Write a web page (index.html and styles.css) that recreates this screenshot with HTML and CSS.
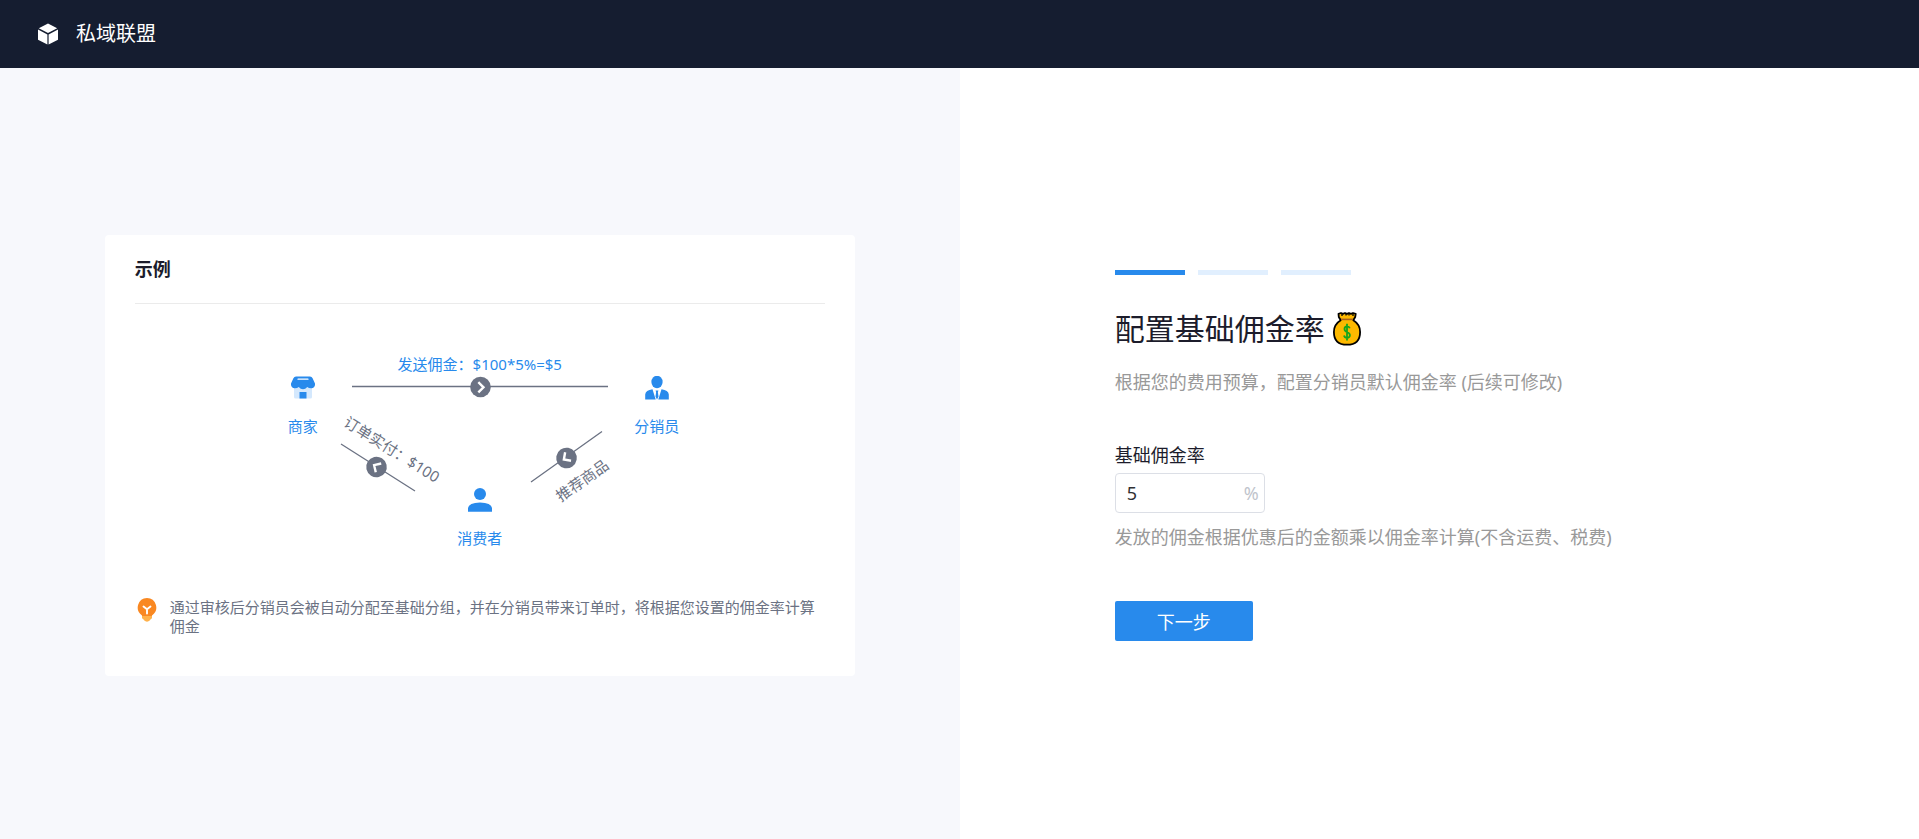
FILE: index.html
```html
<!DOCTYPE html>
<html lang="zh-CN">
<head>
<meta charset="utf-8">
<title>私域联盟</title>
<link rel="stylesheet" href="styles.css">
</head>
<body>
<header class="topbar">
  <svg class="topbar-logo" viewBox="0 0 20 22" aria-hidden="true">
    <path fill="#fff" d="M10 0.4 19.2 5.2 10 10 0.8 5.2ZM0 6.5 9.4 11.4V21.6L0 16.8ZM20 6.5 10.6 11.4V21.6L20 16.8Z"/>
  </svg>
  <span class="topbar-name">私域联盟</span>
</header>
<main class="split">
  <section class="pane pane-example">
    <article class="card">
      <h2 class="card-title">示例</h2>
      <div class="flow">
        <svg class="flow-lines" viewBox="0 0 400 206" aria-hidden="true">
          <defs>
            <g id="arrow">
              <circle r="10.3" fill="#6b7283"/>
              <path d="M-1.3-4 3 0.3-1.3 4.6" fill="none" stroke="#fff" stroke-width="2.4" stroke-linecap="square"/>
            </g>
          </defs>
          <g stroke="#6b7283" stroke-width="1.3">
            <path d="M72 36.5H328M61 94 135 141M251 132 322 81.5"/>
          </g>
          <use href="#arrow" transform="translate(200.5 37)"/>
          <use href="#arrow" transform="translate(96.5 117) rotate(212)"/>
          <use href="#arrow" transform="translate(286.5 108) rotate(145)"/>
        </svg>
        <div class="node node-merchant">
          <svg class="node-icon" viewBox="0 0 24 24" aria-hidden="true">
            <path fill="#d4e8fd" d="M3 11H21V21Q21 22.5 19.5 22.5H4.500Q3 22.500 3 21Z"/>
            <path fill="#288aec" d="M5 0.500H19Q20.800 0.500 21.600 2.200L24 7.500V9Q23.500 12 20.500 12.300Q18 12.500 16.300 11Q14.300 13.200 12 13.200Q9.700 13.200 7.700 11Q6 12.500 3.500 12.300Q0.500 12 0 9V7.500L2.400 2.200Q3.200 0.500 5 0.500Z"/>
            <path stroke="#fff" stroke-width="1.200" stroke-linecap="round" d="M7 3.200H17"/>
            <path fill="#288aec" d="M8.500 16H15.500V22.500H8.500Z"/>
          </svg>
          <span>商家</span>
        </div>
        <div class="node node-agent">
          <svg class="node-icon" viewBox="0 0 24 24" aria-hidden="true">
            <g fill="#288aec">
              <ellipse cx="12" cy="6" rx="5.600" ry="6.200"/>
              <path d="M7.500 13.300 10.700 23.500H0.200V18.500Q0.600 14.200 7.500 13.300ZM16.500 13.300 13.300 23.500H23.800V18.500Q23.400 14.200 16.500 13.300ZM10.600 14.500H13.400L12.900 16.300 13.500 20.500 12 23.500 10.500 20.500 11.100 16.300Z"/>
            </g>
          </svg>
          <span>分销员</span>
        </div>
        <div class="node node-customer">
          <svg class="node-icon" viewBox="0 0 24 24" aria-hidden="true">
            <g fill="#288aec">
              <circle cx="12" cy="6" r="6"/>
              <path d="M0 23.800V20Q0.800 14.800 12 14.500Q23.200 14.800 24 20V23.800Z"/>
            </g>
          </svg>
          <span>消费者</span>
        </div>
        <span class="edge edge-commission">发送佣金：$100*5%=$5</span>
        <span class="edge edge-order">订单实付：$100</span>
        <span class="edge edge-recommend">推荐商品</span>
      </div>
      <div class="tip">
        <svg class="tip-icon" viewBox="0 0 20 24" aria-hidden="true">
          <path fill="#ffb14a" d="M5 16H15V20.500H14.500Q13.500 21 13 22.300Q10 25 7 22.300Q6.500 21 5.500 20.500H5Z"/>
          <path fill="#f98822" d="M10 0A9.500 9.500 0 0 1 15 17.400V18H5V17.400A9.500 9.500 0 0 1 10 0Z"/>
          <path fill="none" stroke="#fff" stroke-width="1.900" stroke-linecap="round" stroke-linejoin="round" d="M6.500 8.500 10 11.300 13.500 8.500M10 11.300V15.500"/>
        </svg>
        <p class="tip-text">通过审核后分销员会被自动分配至基础分组，并在分销员带来订单时，将根据您设置的佣金率计算佣金</p>
      </div>
    </article>
  </section>
  <section class="pane pane-setup">
    <form class="setup">
      <div class="steps">
        <span class="step step-active"></span>
        <span class="step"></span>
        <span class="step"></span>
      </div>
      <h1 class="setup-title">
        配置基础佣金率
        <svg class="setup-emoji" viewBox="0 0 28 34" role="img" aria-label="钱袋">
          <path fill="#fdb900" stroke="#000" stroke-width="1.800" stroke-linejoin="round" d="M5.500 1.800 8 1 10 1.800 12 1 14 1.800 16 1 18 1.800 20 1 22.700 1.800 22.200 5 20.300 8.300Q27.100 12.500 27.100 20Q27.100 32.700 14 32.700Q0.900 32.700 0.900 20Q0.900 12.500 7.700 8.300L5.800 5Z"/>
          <path fill="none" stroke="#000" stroke-width="1.300" d="M9 2V4M13 2V3.500M16 2V3.500M20 2V4"/>
          <path stroke="#a8611b" stroke-width="1.600" d="M8 7.400H20"/>
          <path fill="none" stroke="#16a51c" stroke-width="1.800" d="M16.800 16.300Q16.200 14.300 14 14.300Q11.500 14.400 11.500 17Q11.500 19 14 20Q16.900 21 16.900 23.300Q16.800 25.800 14 25.900Q11.600 25.800 11 23.500M14 11.800V28.500"/>
        </svg>
      </h1>
      <p class="setup-desc">根据您的费用预算，配置分销员默认佣金率 (后续可修改)</p>
      <label class="field-label" for="rate">基础佣金率</label>
      <div class="field-box">
        <input class="field-input" id="rate" type="text" value="5">
        <span class="field-unit">%</span>
      </div>
      <p class="field-hint">发放的佣金根据优惠后的金额乘以佣金率计算(不含运费、税费)</p>
      <button class="next" type="button">下一步</button>
    </form>
  </section>
</main>
</body>
</html>
```
FILE: styles.css
```css
* {
  box-sizing: border-box;
}

body {
  display: flex;
  flex-direction: column;
  min-height: 100vh;
  margin: 0;
  background: #fff;
  color: #1c1c2b;
  font-family: "Noto Sans", "Noto Sans CJK SC", sans-serif;
  font-size: 15px;
}

h1,
h2,
p {
  margin: 0;
}

.topbar {
  display: flex;
  align-items: center;
  gap: 18px;
  height: 68px;
  padding: 0 38px;
  background: #151d30;
  color: #fff;
}

.topbar-logo {
  width: 20px;
  height: 22px;
}

.topbar-name {
  font-size: 20px;
  line-height: 28px;
}

.split {
  display: grid;
  flex: 1;
  grid-template-columns: 1fr 1fr;
}

.pane {
  display: flex;
  align-items: center;
  justify-content: center;
  padding: 24px 24px 20px;
}

.pane-example {
  background: #f7f8fc;
}

.card {
  width: 100%;
  max-width: 750px;
  padding: 0 30px 40px;
  border-radius: 4px;
  background: #fff;
}

.card-title {
  padding: 22px 0;
  border-bottom: 1px solid #ebebeb;
  font-size: 18px;
  font-weight: 700;
  line-height: 24px;
}

.flow {
  position: relative;
  width: 400px;
  height: 206px;
  margin: 46px auto 42px;
}

.flow-lines {
  display: block;
  width: 400px;
  height: 206px;
}

.node {
  position: absolute;
  display: flex;
  flex-direction: column;
  align-items: center;
  gap: 16px;
  width: 60px;
  color: #288aec;
  line-height: 20px;
}

.node-icon {
  width: 24px;
  height: 24px;
}

.node-merchant {
  top: 26px;
  left: -7px;
}

.node-agent {
  top: 26px;
  left: 347px;
}

.node-customer {
  top: 138px;
  left: 170px;
}

.edge {
  position: absolute;
  color: #6b7283;
  line-height: 20px;
  white-space: nowrap;
  transform: translate(-50%, -50%);
}

.edge-commission {
  top: 14px;
  left: 200px;
  color: #288aec;
}

.edge-order {
  top: 99px;
  left: 112px;
  transform: translate(-50%, -50%) rotate(32deg);
}

.edge-recommend {
  top: 130px;
  left: 302px;
  transform: translate(-50%, -50%) rotate(-35deg);
}

.tip {
  display: flex;
  gap: 13px;
  padding-left: 2px;
}

.tip-icon {
  flex: none;
  width: 20px;
  height: 24px;
}

.tip-text {
  color: #6b7283;
  line-height: 19px;
}

.setup {
  display: flex;
  flex-direction: column;
  align-items: flex-start;
  width: 100%;
  max-width: 649px;
}

.steps {
  display: flex;
  gap: 13px;
}

.step {
  width: 70px;
  height: 5px;
  background: #e1effe;
}

.step-active {
  background: #288aec;
}

.setup-title {
  display: flex;
  align-items: center;
  gap: 8px;
  margin-top: 34px;
  font-size: 30px;
  font-weight: 400;
  line-height: 40px;
}

.setup-emoji {
  width: 28px;
  height: 34px;
}

.setup-desc {
  margin-top: 21px;
  color: #999;
  font-size: 18px;
  line-height: 24px;
}

.field-label {
  margin-top: 49px;
  font-size: 18px;
  line-height: 24px;
}

.field-box {
  display: flex;
  align-items: center;
  width: 150px;
  height: 40px;
  margin-top: 6px;
  padding: 0 5px 0 11px;
  border: 1px solid #dcdfe6;
  border-radius: 4px;
  font-size: 18px;
}

.field-input {
  flex: 1;
  min-width: 0;
  padding: 0;
  border: 0;
  outline: 0;
  background: none;
  color: #303133;
  font: inherit;
}

.field-unit {
  color: #c0c4cc;
}

.field-hint {
  margin-top: 12px;
  color: #999;
  font-size: 18px;
  line-height: 24px;
}

.next {
  width: 138px;
  height: 40px;
  margin-top: 52px;
  padding: 0;
  border: 0;
  border-radius: 2px;
  background: #288aec;
  color: #fff;
  font: inherit;
  font-size: 18px;
}
```
